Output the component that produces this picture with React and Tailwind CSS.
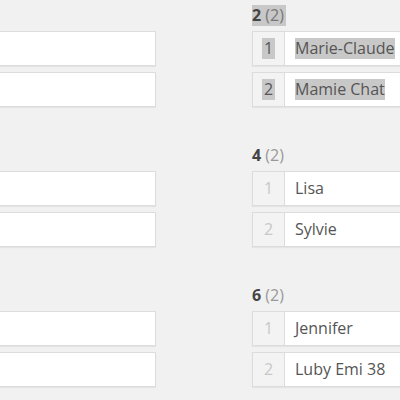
export default function App() {
  const groups = [
    { n: "2", names: ["Marie-Claude", "Mamie Chat"], sel: true },
    { n: "4", names: ["Lisa", "Sylvie"], sel: false },
    { n: "6", names: ["Jennifer", "Luby Emi 38"], sel: false },
  ];
  const font = { fontFamily: '"Open Sans", "Noto Sans", sans-serif' };
  return (
    <div className="w-[400px] h-[400px] overflow-hidden bg-[#f1f1f1] text-[16px] text-[#555]" style={font}>
      <div className="flex">
        <div className="w-[160px] -ml-[4px] shrink-0">
          {groups.map((g) => (
            <div key={g.n} className="h-[140px] pt-[31px] flex flex-col gap-[6px]">
              <div className="h-[35px] bg-white border border-[#dcdcdc] shadow-[0_1px_1px_rgba(0,0,0,0.05)]" />
              <div className="h-[35px] bg-white border border-[#dcdcdc] shadow-[0_1px_1px_rgba(0,0,0,0.05)]" />
            </div>
          ))}
        </div>
        <div className="ml-[96px] w-[200px] shrink-0">
          {groups.map((g) => (
            <div key={g.n} className="h-[140px] flex flex-col">
              <div className="h-[31px] pt-[3px]">
                <span className={"inline-block h-[21px] leading-[21px] pr-[2px] " + (g.sel ? "bg-[#c8c8c8]" : "")}>
                  <span className="font-bold text-[#444]">{g.n}</span>{" "}
                  <span className={g.sel ? "text-[#777]" : "text-[#999]"}>(2)</span>
                </span>
              </div>
              <div className="flex flex-col gap-[6px]">
                {g.names.map((name, i) => (
                  <div key={name} className="h-[35px] flex bg-white border border-[#dcdcdc] shadow-[0_1px_1px_rgba(0,0,0,0.05)]">
                    <div className="w-[32px] shrink-0 bg-[#f3f3f3] border-r border-[#dcdcdc] flex items-center justify-center">
                      <span className={"leading-[21px] px-[2px] " + (g.sel ? "bg-[#c8c8c8] text-[#555]" : "text-[#c8c8c8]")}>{i + 1}</span>
                    </div>
                    <div className="flex items-center pl-[10px] whitespace-nowrap">
                      <span className={"leading-[21px] " + (g.sel ? "bg-[#c8c8c8]" : "")}>{name}</span>
                    </div>
                  </div>
                ))}
              </div>
            </div>
          ))}
        </div>
      </div>
    </div>
  );
}
